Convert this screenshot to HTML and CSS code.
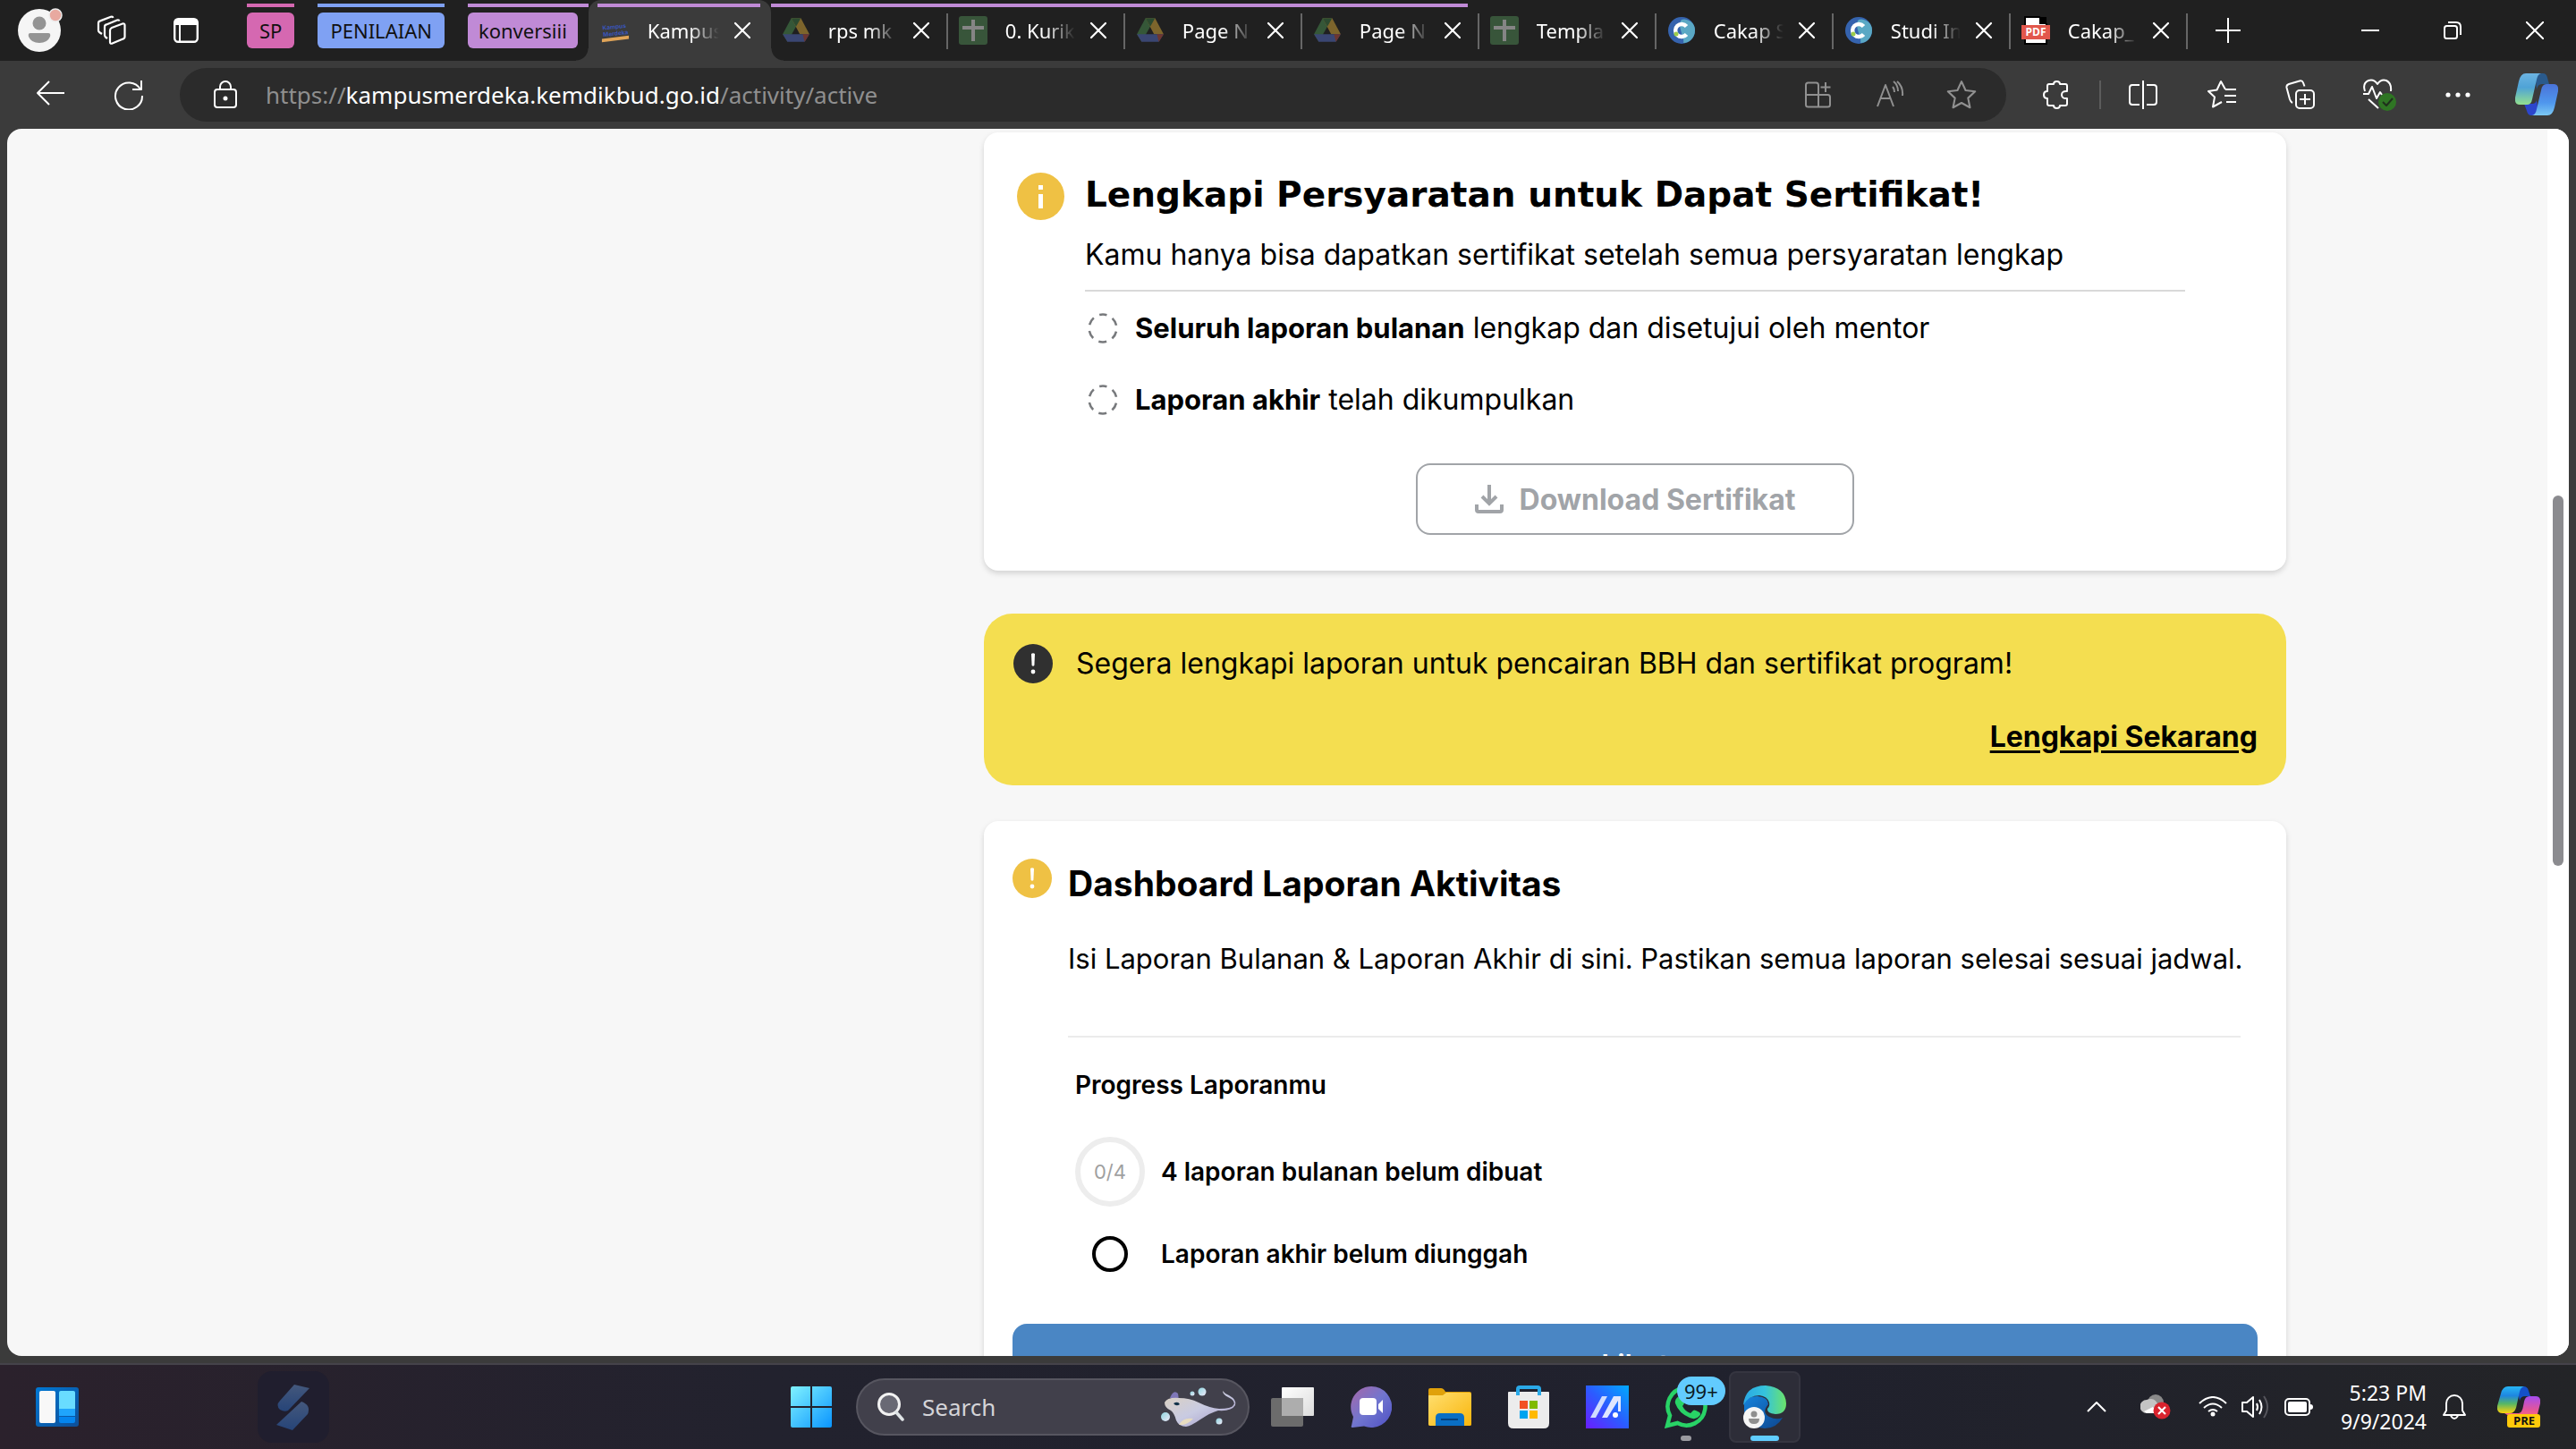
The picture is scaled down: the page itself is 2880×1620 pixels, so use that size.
FILE: index.html
```html
<!DOCTYPE html>
<html lang="id">
<head>
<meta charset="utf-8">
<title>Kampus Merdeka</title>
<link rel="stylesheet" href="styles.css">
</head>
<body>
<svg class="defs" aria-hidden="true">
  <defs>
    <linearGradient id="cop1" x1="0" y1="0" x2="0" y2="1"><stop offset="0" stop-color="#6cb4e2"/><stop offset=".45" stop-color="#4fa3d6"/><stop offset="1" stop-color="#93e08f"/></linearGradient>
    <linearGradient id="cop2" x1="0" y1="0" x2="0" y2="1"><stop offset="0" stop-color="#4a73d8"/><stop offset=".6" stop-color="#4f97ee"/><stop offset="1" stop-color="#7cc8f2"/></linearGradient>
    <linearGradient id="pre1" x1="0" y1="0" x2="0" y2="1"><stop offset="0" stop-color="#27b6f5"/><stop offset=".35" stop-color="#1e86e0"/><stop offset=".65" stop-color="#58b765"/><stop offset="1" stop-color="#ffd20a"/></linearGradient>
    <linearGradient id="pre2" x1="0" y1="0" x2="0" y2="1"><stop offset="0" stop-color="#a64df0"/><stop offset=".6" stop-color="#e0559d"/><stop offset="1" stop-color="#ff6a7c"/></linearGradient>
    <linearGradient id="win" x1="0" y1="0" x2="1" y2="1"><stop offset="0" stop-color="#80f2ff"/><stop offset="1" stop-color="#0a95ff"/></linearGradient>
    <linearGradient id="wid" x1="0" y1="0" x2="1" y2="1"><stop offset="0" stop-color="#0078d4"/><stop offset="1" stop-color="#0f4e96"/></linearGradient>
    <linearGradient id="ess" x1="0" y1="0" x2="0" y2="1"><stop offset="0" stop-color="#44587c"/><stop offset="1" stop-color="#264478"/></linearGradient>
    <linearGradient id="ray" x1="0" y1="0" x2="1" y2="1"><stop offset="0" stop-color="#ded2bd"/><stop offset=".5" stop-color="#c9cbe2"/><stop offset="1" stop-color="#9f94c4"/></linearGradient>
    <linearGradient id="bub" x1="0" y1="0" x2="1" y2="1"><stop offset="0" stop-color="#8ed6e0"/><stop offset="1" stop-color="#efe8f8"/></linearGradient>
    <linearGradient id="tv" x1="0" y1="0" x2="1" y2="1"><stop offset="0" stop-color="#fff"/><stop offset="1" stop-color="#dcdcdc"/></linearGradient>
    <linearGradient id="chat" x1="0" y1="0" x2="1" y2="1"><stop offset="0" stop-color="#a867a8"/><stop offset=".5" stop-color="#7176cf"/><stop offset="1" stop-color="#4f50c4"/></linearGradient>
    <linearGradient id="fol" x1="0" y1="0" x2="1" y2="1"><stop offset="0" stop-color="#ffdf70"/><stop offset="1" stop-color="#f9b50b"/></linearGradient>
    <linearGradient id="asus" x1="0" y1="1" x2="1" y2="0"><stop offset="0" stop-color="#6a1dff"/><stop offset=".5" stop-color="#2b5cff"/><stop offset="1" stop-color="#00aaff"/></linearGradient>
    <linearGradient id="edgeA" x1="0" y1="0" x2="1" y2="0"><stop offset="0" stop-color="#2aa7e4"/><stop offset=".5" stop-color="#35c3dd"/><stop offset="1" stop-color="#6be36a"/></linearGradient>
    <linearGradient id="edgeB" x1="0" y1="0" x2="1" y2="1"><stop offset="0" stop-color="#1583dc"/><stop offset="1" stop-color="#0d468f"/></linearGradient>
    <symbol id="x" viewBox="0 0 20 20"><path d="M2 2 18 18M18 2 2 18" stroke="currentColor" stroke-width="2.2" fill="none" stroke-linecap="round"/></symbol>
    <symbol id="drive" viewBox="0 0 30 28"><path d="M10 1h10l-14 25L1 18z" fill="#355738"/><path d="M10 1h10l9 17H19z" fill="#7d652c"/><path d="M10 1h10l-5 9z" fill="#2c4a30"/><path d="M1 18h28l-5 8H6z" fill="#3a4672"/><path d="M22 18h7l-5 8z" fill="#6d3630"/></symbol>
    <symbol id="sheet" viewBox="0 0 32 32"><rect width="32" height="32" rx="3" fill="#38553a"/><path d="M14 4h4v24h-4zM4 11h24v4H4z" fill="#858585"/></symbol>
    <symbol id="cakap" viewBox="0 0 32 32"><circle cx="16" cy="16" r="15" fill="#3563ae"/><path d="M16 4a12 12 0 0 1 15 12c0 8-6 14-13 14 2-6-8-20-2-26z" fill="#5aa8c4"/><path d="M21.500 11.500A7 7 0 1 0 21.500 20.500" fill="none" stroke="#fff" stroke-width="4.500"/><circle cx="10" cy="20" r="2.500" fill="#9ccc4a"/></symbol>
    <symbol id="dashed" viewBox="0 0 32 32"><circle cx="16" cy="16" r="14.500" fill="none" stroke="#77797c" stroke-width="2.400" stroke-dasharray="8.500 6.680" stroke-dashoffset="4.250" transform="rotate(-90 16 16)"/></symbol>
    <symbol id="alert" viewBox="0 0 44 44"><circle cx="22" cy="22" r="22" fill="currentColor"/><path d="M20 11q2-1.500 4 0l-.600 13q-1.400 1.500-2.800 0z" fill="#fff"/><circle cx="22" cy="31" r="2.400" fill="#fff"/></symbol>
  </defs>
</svg>

<div class="window">
  <header class="tabstrip">
    <button class="icon-btn avatar" aria-label="Profil"><svg width="50" height="50" viewBox="0 0 50 50"><circle cx="24" cy="25" r="24" fill="#f5f5f5"/><circle cx="24" cy="17" r="7.500" fill="#949494"/><path d="M14 28h20q3 0 2 4-3 7-12 7t-12-7q-1-4 2-4z" fill="#949494"/><circle cx="42" cy="8" r="7" fill="#e8a9a0" stroke="#ececec" stroke-width="1.500"/></svg></button>
    <button class="icon-btn spaces" aria-label="Ruang kerja"><svg width="34" height="34" viewBox="0 0 34 34" fill="none" stroke="#fff" stroke-width="2.200" stroke-linejoin="round"><path d="m17 14 12-4.500q2.500-.500 2.500 1.500v13q0 2-2 2.600l-12 5q-2.500.700-2.500-1.500V17q0-2 2-3z"/><path d="m12 26-2-1.500q-1-1-1-2.500V13q0-2 2-2.600L23 5.500q2-.500 2.500 1"/><path d="m6 21-3-2q-1-1-1-2V9q0-2 2-2.600L16 1.800q2-.500 2.500 1"/></svg></button>
    <button class="icon-btn panel" aria-label="Menu tab"><svg width="28" height="28" viewBox="0 0 28 28"><rect x="1.200" y="1.200" width="25.600" height="25.600" rx="4" fill="none" stroke="#fff" stroke-width="2.400"/><path d="M1 8V4q0-3 3-3h20q3 0 3 3v4zM6 8h2v18H6z" fill="#fff"/></svg></button>
    <div class="group pink"><button class="chip">SP</button></div>
    <div class="group blue"><button class="chip">PENILAIAN</button></div>
    <div class="group purple"><button class="chip">konversiii</button></div>
    <div class="tab active"><svg class="fav" viewBox="0 0 34 34"><text x="2" y="15" class="logo-text" transform="rotate(-6 17 17)">Kampus</text><text x="2" y="23" class="logo-text" transform="rotate(-6 17 17)">Merdeka</text><path d="m1 27 32-4v4L1 31z" fill="#e0a458"/></svg><span class="name">Kampus</span><button class="close" aria-label="Tutup"><svg><use href="#x"/></svg></button></div>
    <div class="tab grouped"><svg class="fav"><use href="#drive"/></svg><span class="name">rps mk</span><button class="close" aria-label="Tutup"><svg><use href="#x"/></svg></button></div>
    <div class="tab grouped"><svg class="fav"><use href="#sheet"/></svg><span class="name">0. Kurik</span><button class="close" aria-label="Tutup"><svg><use href="#x"/></svg></button></div>
    <div class="tab grouped"><svg class="fav"><use href="#drive"/></svg><span class="name">Page N</span><button class="close" aria-label="Tutup"><svg><use href="#x"/></svg></button></div>
    <div class="tab grouped last"><svg class="fav"><use href="#drive"/></svg><span class="name">Page N</span><button class="close" aria-label="Tutup"><svg><use href="#x"/></svg></button></div>
    <div class="tab"><svg class="fav"><use href="#sheet"/></svg><span class="name">Templa</span><button class="close" aria-label="Tutup"><svg><use href="#x"/></svg></button></div>
    <div class="tab"><svg class="fav"><use href="#cakap"/></svg><span class="name">Cakap S</span><button class="close" aria-label="Tutup"><svg><use href="#x"/></svg></button></div>
    <div class="tab"><svg class="fav"><use href="#cakap"/></svg><span class="name">Studi In</span><button class="close" aria-label="Tutup"><svg><use href="#x"/></svg></button></div>
    <div class="tab"><svg class="fav" viewBox="0 0 32 32"><path d="M4 1h16l8 8v22H4z" fill="#fff" stroke="#000" stroke-width="2"/><path d="M20 1h8v8h-8z" fill="#000"/><rect y="10" width="32" height="16" fill="#e2574c"/><text x="16" y="22" text-anchor="middle" class="pdf-text">PDF</text></svg><span class="name">Cakap_</span><button class="close" aria-label="Tutup"><svg><use href="#x"/></svg></button></div>
    <button class="icon-btn new-tab" aria-label="Tab baru"><svg width="28" height="28" viewBox="0 0 28 28"><path d="M14 0v28M0 14h28" stroke="#fff" stroke-width="2"/></svg></button>
    <div class="win-controls">
      <button class="icon-btn" aria-label="Kecilkan"><svg width="20" height="20" viewBox="0 0 20 20"><path d="M0 10h20" stroke="#fff" stroke-width="2"/></svg></button>
      <button class="icon-btn" aria-label="Pulihkan"><svg width="20" height="20" viewBox="0 0 20 20" fill="none" stroke="#fff" stroke-width="2"><rect x="1" y="5" width="14" height="14" rx="2.500"/><path d="M5 1h9q5 0 5 5v9"/></svg></button>
      <button class="icon-btn" aria-label="Tutup jendela"><svg width="20" height="20" viewBox="0 0 20 20"><path d="m0 0 20 20M20 0 0 20" stroke="#fff" stroke-width="2"/></svg></button>
    </div>
  </header>

  <nav class="toolbar">
    <button class="tool" aria-label="Kembali"><svg width="32" height="32" viewBox="0 0 32 32"><path d="M32 14H2M15 1 2 14l13 13" /></svg></button>
    <button class="tool reload" aria-label="Muat ulang"><svg width="34" height="34" viewBox="0 0 34 34"><path d="M30 11A15 15 0 1 0 32 18M31 1v10H21"/></svg></button>
    <div class="address">
      <svg class="lock" width="26" height="32" viewBox="0 0 26 32"><rect x="1" y="10" width="24" height="20" rx="3"/><path d="M7 10V7a6 6 0 0 1 12 0v3"/><circle cx="13" cy="20" r="1.500" fill="#fff"/></svg>
      <div class="url">https://<b>kampusmerdeka.kemdikbud.go.id</b>/activity/active</div>
      <button class="mini" aria-label="Aplikasi"><svg width="30" height="30" viewBox="0 0 30 30"><path d="M15 15V4q0-2.500-2.500-2.500h-9Q1 1.500 1 4v22q0 2.500 2.500 2.500h22Q28 28.500 28 26v-8.500Q28 15 25.500 15H1M15 15v13.500M23 1v11M17.500 6.500h11"/></svg></button>
      <button class="mini" aria-label="Baca nyaring"><svg width="32" height="32" viewBox="0 0 32 32"><path d="m2 29 9-24 9 24M5 20h12M20 1q5 4 5 11M19 7q2 2 2 6M24 1q7 6 6 16"/></svg></button>
      <button class="mini" aria-label="Favorit"><svg width="34" height="34" viewBox="0 0 32 32"><path d="m16 2 4.300 9.300 10 1.200-7.400 6.900 2 10L16 24.500l-8.900 4.900 2-10L1.700 12.500l10-1.200z"/></svg></button>
    </div>
    <button class="tool" aria-label="Ekstensi"><svg width="32" height="32" viewBox="0 0 32 32"><path d="M6 6q0-2 2-2h5q0-3 3.500-3T20 4h6q2 0 2 2v6q-6-.500-6 4t6 4v6q0 2-2 2h-6q0 3-3.500 3T13 28H8q-2 0-2-2v-6q-4 0-4-4t4-4z"/></svg></button>
    <span class="divider"></span>
    <div class="tools">
      <button class="tool" aria-label="Layar terpisah"><svg width="32" height="32" viewBox="0 0 32 32"><path d="M16 0v32M12 5H4Q1 5 1 8v16q0 3 3 3h8M20 5h8q3 0 3 3v16q0 3-3 3h-8"/></svg></button>
      <button class="tool" aria-label="Daftar favorit"><svg width="34" height="34" viewBox="0 0 34 34"><path d="M21 11h12M20 18h13M22 25h11M21 11l-5-9-4.500 9.500L2 13l7 6.500L7 30.500l10-5.500"/></svg></button>
      <button class="tool" aria-label="Koleksi"><svg width="34" height="34" viewBox="0 0 34 34"><rect x="12" y="12" width="20" height="20" rx="4"/><path d="M22 16v12M16 22h12M8 26q-2-1-3-4L1.500 9Q1 6 4 5l12-3.500q3-.700 4 2l1.500 4"/></svg></button>
      <button class="tool" aria-label="Esensial browser"><svg width="38" height="36" viewBox="0 0 38 36"><path d="M3 14Q0 5 7 2q6-2 10 4 4-6 10-4 6 3 5 12M1 17h6l4-8 5 13 4-7 2 3M7 23l11 10"/><circle cx="28" cy="26" r="10" fill="#2f7524" stroke="none"/><path d="m23 26 4 4 7-8" stroke="#1f2f1c"/></svg></button>
      <button class="tool" aria-label="Lainnya"><svg width="28" height="8" viewBox="0 0 28 8"><g fill="#fff" stroke="none"><circle cx="3" cy="4" r="2.600"/><circle cx="14" cy="4" r="2.600"/><circle cx="25" cy="4" r="2.600"/></g></svg></button>
      <button class="tool" aria-label="Copilot"><svg width="48" height="48" viewBox="0 0 48 48" class="solid"><path d="M22 0h9q4 0 5 5l2 7h-8q-5 0-6 6z" fill="#2a5a8c"/><path d="M26 47h-8q-4 0-5-5l-3-8h9q4 0 5-4z" fill="#2c46cc"/><path d="M12 0h17q-4 1-5 7l-5 22q-1 6-6 6H5q-6 0-5-8L4 9q2-9 8-9z" fill="url(#cop1)"/><path d="M36 47H19q4-1 5-7l5-21q1-7 6-7h8q6 0 5 8l-4 18q-2 9-8 9z" fill="url(#cop2)"/></svg></button>
    </div>
  </nav>

  <div class="viewport">
    <main class="page">
      <section class="card certificate">
        <div class="cert-body">
          <svg class="info" width="53" height="53" viewBox="0 0 53 53"><circle cx="26.500" cy="26.500" r="26.500" fill="#efc144"/><path d="M24 14h5v5h-5zM24 24h5v16h-5z" fill="#fff"/></svg>
          <div class="cert-text">
            <h1>Lengkapi Persyaratan untuk Dapat Sertifikat!</h1>
            <p class="lead">Kamu hanya bisa dapatkan sertifikat setelah semua persyaratan lengkap</p>
            <ul class="checks">
              <li><svg width="34" height="34"><use href="#dashed"/></svg><span><strong>Seluruh laporan bulanan</strong> lengkap dan disetujui oleh mentor</span></li>
              <li><svg width="34" height="34"><use href="#dashed"/></svg><span><strong>Laporan akhir</strong> telah dikumpulkan</span></li>
            </ul>
          </div>
        </div>
        <button class="download"><svg width="32" height="32" viewBox="0 0 32 32"><path d="M16 0v20M8 13l8 8 8-8M2 22v6q0 2 2 2h24q2 0 2-2v-6"/></svg>Download Sertifikat</button>
      </section>

      <section class="banner">
        <div class="banner-row"><svg class="dark" width="44" height="44"><use href="#alert"/></svg><p>Segera lengkapi laporan untuk pencairan BBH dan sertifikat program!</p></div>
        <a href="#laporan">Lengkapi Sekarang</a>
      </section>

      <section class="card report" id="laporan">
        <div class="report-body">
          <svg class="amber" width="44" height="44"><use href="#alert"/></svg>
          <div class="report-text">
            <h2>Dashboard Laporan Aktivitas</h2>
            <p class="desc">Isi Laporan Bulanan &amp; Laporan Akhir di sini. Pastikan semua laporan selesai sesuai jadwal.</p>
            <div class="progress">
              <h3>Progress Laporanmu</h3>
              <div class="step"><span class="count">0/4</span><span>4 laporan bulanan belum dibuat</span></div>
              <div class="step"><span class="slot"><i class="ring"></i></span><span>Laporan akhir belum diunggah</span></div>
            </div>
          </div>
        </div>
        <button class="view">Lihat</button>
      </section>
    </main>
    <div class="scrollbar"><span class="thumb"></span></div>
  </div>
</div>

<footer class="taskbar">
  <div class="task-left">
    <button class="task" aria-label="Widget"><svg width="48" height="44" viewBox="0 0 48 44"><rect width="48" height="44" rx="3" fill="url(#wid)"/><rect x="4" y="4" width="18" height="36" rx="2" fill="#f8f8f8"/><path d="M26 6q0-2 2-2h14q2 0 2 2v18H26z" fill="#69dcff"/><path d="M26 24h18v8H26z" fill="#1fa5fc"/><path d="M26 33h18v5q0 2-2 2H28q-2 0-2-2z" fill="#0485ee"/></svg></button>
    <button class="task spark" aria-label="Peluncur"><svg width="40" height="52" viewBox="0 0 40 52"><path d="M21 1 38 5 14 30q-4 2-9-1-5-5 0-10z" fill="url(#ess)"/><path d="m29 20q11 4 7 14L19 52 1 46z" fill="url(#ess)"/></svg></button>
  </div>
  <div class="task-center">
    <button class="task" aria-label="Mulai"><svg width="46" height="46" viewBox="0 0 46 46"><path d="M2 0h20v22H0V2q0-2 2-2zM24 0h20q2 0 2 2v20H24zM0 24h22v22H2q-2 0-2-2zM24 24h22v20q0 2-2 2H24z" fill="url(#win)"/></svg></button>
    <label class="search">
      <svg width="30" height="32" viewBox="0 0 30 32"><circle cx="13" cy="13" r="11.500" fill="#696974" stroke="#f2f2f2" stroke-width="3"/><path d="m21 22 7 8" stroke="#dfe4e6" stroke-width="3.500" stroke-linecap="round"/></svg>
      <input type="search" placeholder="Search" aria-label="Search">
      <svg width="86" height="44" viewBox="0 0 86 44"><path d="M10 12q4-10 9-5l1 7z" fill="#7f77b8"/><path d="M4 17q3-6 16-5 12 0 22 5 12 6 23 7 14 0 16-4 3-5-6-9-6-3-6-7 2 3 7 5 9 5 7 11-4 7-19 6-8 2-20 10-10 7-16 8-8 0-11-7-2-8-6-11-7-3-7-9z" fill="url(#ray)"/><path d="M20 42q5-9 16-7-7 8-16 7z" fill="#e7dcc0"/><path d="M14 18q5-3 7 1-4 3-7-1z" fill="#12324a"/><g fill="url(#bub)"><circle cx="5" cy="33" r="5"/><circle cx="46" cy="5" r="4.500"/><circle cx="35" cy="7" r="2.500"/><circle cx="65" cy="38" r="3.500"/></g></svg>
    </label>
    <button class="task" aria-label="Tampilan tugas"><svg width="48" height="44" viewBox="0 0 48 44"><rect x="12" width="36" height="32" rx="1" fill="url(#tv)"/><rect y="12" width="36" height="32" rx="2" fill="#6c6c6c"/><path d="M12 12h24v20H12z" fill="#adadad"/></svg></button>
    <button class="task" aria-label="Chat"><svg width="46" height="46" viewBox="0 0 46 46"><path d="M23 0a23 23 0 1 1-8 44.500L2 46q-2 0-1-2l2-10A23 23 0 0 1 23 0z" fill="url(#chat)"/><rect x="10" y="13" width="19" height="19" rx="4" fill="#fff"/><path d="m31 20 5-5v15l-5-5z" fill="#fff"/></svg></button>
    <button class="task" aria-label="File"><svg width="48" height="42" viewBox="0 0 48 42"><path d="M0 8V2q0-2 2-2h12q3 0 5 4h27q2 0 2 2v34q0 2-2 2H2q-2 0-2-2z" fill="#e0a10a"/><path d="M0 8h16l4-3h26q2 0 2 2v33q0 2-2 2H2q-2 0-2-2z" fill="url(#fol)"/><path d="M8 42V33q0-5 5-5h22q5 0 5 5v9z" fill="#0a6fc4"/><path d="M14 35h19" stroke="#06427e" stroke-width="2"/></svg></button>
    <button class="task" aria-label="Store"><svg width="46" height="48" viewBox="0 0 46 48"><path d="M0 8q0-1 1-1h44q1 0 1 1v34q0 6-6 6H6q-6 0-6-6z" fill="#ececec"/><path d="M11 11V4q0-2 2-2h20q2 0 2 2v7" fill="none" stroke="#2aa9e8" stroke-width="4"/><path d="M13 17h9v9h-9z" fill="#f25022"/><path d="M24 17h9v9h-9z" fill="#7fba00"/><path d="M13 28h9v9h-9z" fill="#00a4ef"/><path d="M24 28h9v9h-9z" fill="#ffb900"/></svg></button>
    <button class="task" aria-label="MyASUS"><svg width="48" height="48" viewBox="0 0 48 48"><path d="M0 0h48v48H0z" fill="url(#asus)"/><path d="M5 36 18 12h6L11 36z" fill="#cfdcff"/><path d="M18 36 31 12h8v17h-3V17L24 36z" fill="#dfe6ff"/><circle cx="33" cy="33" r="3" fill="#fff"/></svg></button>
    <button class="task whatsapp" aria-label="WhatsApp"><svg width="48" height="48" viewBox="0 0 48 48"><path d="M3 45 6 33.500A21 21 0 1 1 14.500 42z" fill="none" stroke="#28d366" stroke-width="4.500"/><path d="M16 12q3-1 4 2l2 5q0 2-2 4 3 6 9 8l3-3q1-1 3 0l4 2q2 2 0 4-4 5-11 2Q16 31 12 20q-1-5 4-8z" fill="#28d366"/></svg><span class="badge">99+</span><i class="dot"></i></button>
    <button class="task edge" aria-label="Edge"><svg width="48" height="48" viewBox="0 0 48 48"><path d="M1 20Q4 12 16 12q12 1 12 9-8 9 1 14 8 4 15 1-7 12-20 12Q4 46 1 28z" fill="url(#edgeB)"/><path d="M0 22Q2 0 25 0q22 2 23 20 0 12-12 12-10-1-9-6 3-3 2-7-2-7-11-8Q6 11 0 22z" fill="url(#edgeA)"/><circle cx="12" cy="36" r="12" fill="#f5f5f5"/><circle cx="12" cy="32" r="3.500" fill="#8f8f8f"/><path d="M6 37h12q0 6-6 6t-6-6z" fill="#8f8f8f"/></svg><i class="dot"></i></button>
  </div>
  <div class="tray">
    <svg class="chev" width="22" height="14" viewBox="0 0 22 14"><path d="M1 12 11 2l10 10"/></svg>
    <svg class="cloud" width="34" height="28" viewBox="0 0 34 28"><circle cx="17" cy="9" r="9" fill="#8a8a8a"/><path d="M7 21a7 7 0 0 1 0-15q10-4 13 7l-4 8z" fill="#c4c4c4"/><path d="m4 19 10-5 5 7H7z" fill="#fff"/><circle cx="24" cy="18" r="9.500" fill="#d9232e"/><path d="m20 14 8 8M28 14l-8 8" stroke="#fff" stroke-width="2.200"/></svg>
    <div class="status">
      <svg width="32" height="24" viewBox="0 0 32 24"><path d="M1 8q15-14 30 0M6 13q10-9 20 0M11 17q5-4 10 0"/><circle cx="16" cy="20" r="2.500" fill="#fff" stroke="none"/></svg>
      <svg width="32" height="28" viewBox="0 0 32 28"><path d="M1 9h5l7-6v22l-7-6H1zM17 10q2 4 0 8M20 6q5 8 0 16"/><path d="M25 2q8 12 0 24" class="dim"/></svg>
      <svg width="32" height="20" viewBox="0 0 32 20"><rect x="1" y="1" width="27" height="18" rx="4"/><rect x="4" y="4" width="21" height="12" rx="2" fill="#fff" stroke="none"/><path d="M29 7q3 0 3 3t-3 3z" fill="#fff" stroke="none"/></svg>
    </div>
    <div class="clock"><span>5:23 PM</span><span>9/9/2024</span></div>
    <svg class="bell" width="26" height="30" viewBox="0 0 26 30"><path d="M1 24l3-5v-8a9 9 0 0 1 18 0v8l3 5zM9 25q4 6 8 0"/></svg>
    <svg class="pre" width="48" height="46" viewBox="0 0 48 46"><path d="M22 0h7q5 0 6 5l2 6h-6q-5 0-6 5z" fill="#1450c8"/><path d="M12 0h18q-4 1-5 6l-4 18q-2 6-7 6H6q-7 0-6-8L4 8q2-8 8-8z" fill="url(#pre1)"/><path d="M8 30h16q4-1 5-8l1-5q1-6 6-6h7q6 0 5 8l-4 16H16z" fill="url(#pre2)"/><rect x="11" y="31" width="37" height="15" rx="3" fill="#ffca0a"/><text x="30" y="43" text-anchor="middle" class="pre-text">PRE</text></svg>
  </div>
</footer>
</body>
</html>
```
FILE: styles.css
```css
* { box-sizing: border-box; }

body {
  margin: 0;
  height: 100vh;
  display: flex;
  flex-direction: column;
  overflow: hidden;
  background: #3b3b3b;
  color: #000;
  font-family: "Inter", sans-serif;
  font-size: 32px;
}

h1, h2, h3, p, ul { margin: 0; padding: 0; }
button { font: inherit; color: inherit; background: none; border: 0; padding: 0; }
svg { display: block; flex: none; }
.defs { position: absolute; width: 0; height: 0; }

.window { flex: 1; min-height: 0; display: flex; flex-direction: column; }

/* Tab strip */
.tabstrip {
  flex: none;
  height: 68px;
  display: flex;
  align-items: center;
  padding-left: 20px;
  background: #202020;
  color: #fff;
  font-family: "Noto Sans", sans-serif;
  font-size: 22px;
}
.icon-btn { display: flex; align-items: center; justify-content: center; flex: none; }
.spaces { margin-left: 38px; }
.panel { margin: 0 54px 0 52px; }

.group { align-self: stretch; display: flex; align-items: center; margin-right: 26px; background: linear-gradient(var(--c) 0 0) 0 4px / 100% 4px no-repeat; }
.chip { height: 40px; padding: 0 14px; border-radius: 6px; background: var(--c); color: #111; }
.pink { --c: #d568b1; }
.blue { --c: #7fa1f3; }
.purple { --c: #c08ad6; margin-right: 0; padding-right: 12px; }
.purple .chip { padding: 0 12px; }

.tab {
  position: relative;
  flex: 0 1 198px;
  min-width: 0;
  height: 68px;
  display: flex;
  align-items: center;
  padding: 0 20px 0 12px;
  background: linear-gradient(#666 0 0) right 15px / 2px 40px no-repeat;
}
.fav { width: 32px; height: 32px; margin-right: 20px; }
.tab .name { flex: 1; min-width: 0; overflow: hidden; white-space: nowrap; -webkit-mask-image: linear-gradient(to right, #000 55%, transparent 95%); mask-image: linear-gradient(to right, #000 55%, transparent 95%); }
.close { flex: none; margin-left: 12px; }
.close svg { width: 20px; height: 20px; }
.grouped { background: linear-gradient(#666 0 0) right 15px / 2px 40px no-repeat, linear-gradient(#c08ad6 0 0) 0 4px / 100% 4px no-repeat; }
.grouped.last { background-size: 2px 40px, calc(100% - 13px) 4px; }
.active {
  flex-basis: 204px;
  padding: 0 22px 0 14px;
  border-radius: 14px 14px 0 0;
  background: linear-gradient(#c08ad6 0 0) 10px 4px / calc(100% - 22px) 4px no-repeat, #3b3b3b;
}
.active::before, .active::after { content: ""; position: absolute; bottom: 0; width: 14px; height: 14px; }
.active::before { right: 100%; background: radial-gradient(circle at 0 0, transparent 13px, #3b3b3b 14px); }
.active::after { left: 100%; background: radial-gradient(circle at 100% 0, transparent 13px, #3b3b3b 14px); }
.logo-text { font: 700 7px "Inter", sans-serif; fill: #3a55b8; }
.pdf-text { font: 700 12px "Open Sans", sans-serif; fill: #fff; }
.new-tab { margin-left: 31px; }
.win-controls { margin-left: auto; display: flex; }
.win-controls .icon-btn { width: 92px; height: 68px; }

/* Toolbar */
.toolbar { flex: none; height: 76px; display: flex; align-items: center; padding: 0 16px 0 28px; color: #fff; }
.toolbar svg:not(.solid) { fill: none; stroke: #fff; stroke-width: 2; stroke-linejoin: round; }
.tool { width: 56px; height: 56px; display: flex; align-items: center; justify-content: center; flex: none; }
.reload { margin: 0 29px 0 32px; }
.address {
  flex: 1;
  min-width: 0;
  height: 60px;
  display: flex;
  align-items: center;
  gap: 40px;
  margin-right: 28px;
  padding: 0 30px 0 38px;
  border-radius: 30px;
  background: #2b2b2b;
}
.lock { margin-right: -8px; }
.url { flex: 1; min-width: 0; overflow: hidden; font: 26px/40px "Noto Sans", sans-serif; color: #8f8f8f; white-space: nowrap; }
.url b { font-weight: 400; color: #fff; }
.mini { width: 40px; display: flex; justify-content: center; }
.toolbar .mini svg { stroke: #909090; }
.divider { width: 2px; height: 32px; margin: 0 19px 0 20px; background: #5c5c5c; }
.tools { display: flex; gap: 32px; }

/* Page area */
.viewport { flex: 1; min-height: 0; display: flex; margin: 0 8px 8px; border-radius: 16px; overflow: hidden; background: #f7f7f7; }
.page { flex: 1; min-width: 0; display: flex; flex-direction: column; align-items: flex-end; padding: 4px 292px 0 40px; }
.page > * { width: 100%; max-width: 1456px; flex: none; }
.scrollbar { width: 24px; display: grid; grid-template-rows: 410fr 414fr 548fr; justify-content: center; background: #fff; }
.thumb { grid-row: 2; width: 12px; border-radius: 6px; background: #8b8b8f; }

.card { border-radius: 16px; background: #fff; box-shadow: 0 3px 6px rgba(0, 0, 0, .15); }
.certificate { padding: 45px 0 40px; margin-bottom: 48px; }
.cert-body { display: flex; gap: 23px; padding: 0 113px 0 37px; }
.cert-text { flex: 1; min-width: 0; }
h1 { font: 700 39px/50px "DejaVu Sans", sans-serif; }
.lead { margin-top: 18px; padding-bottom: 15px; border-bottom: 2px solid #d9d9d9; line-height: 48px; }
.checks { list-style: none; display: grid; gap: 32px; margin-top: 17px; padding-left: 3px; line-height: 48px; }
.checks li { display: flex; align-items: center; gap: 19px; }
strong { font-size: 31px; font-weight: 700; }
.download {
  width: 490px;
  height: 80px;
  display: flex;
  align-items: center;
  justify-content: center;
  gap: 18px;
  margin: 47px auto 0;
  border: 2px solid #a1a4a8;
  border-radius: 16px;
  color: #a1a4a8;
  font-weight: 700;
}
.download svg { fill: none; stroke: currentColor; stroke-width: 4; }

.banner { margin-bottom: 40px; padding: 32px 32px 30px 33px; border-radius: 32px; background: #f4de50; line-height: 48px; }
.banner-row { display: flex; align-items: center; gap: 26px; margin-bottom: 34px; }
.banner a { display: block; width: fit-content; margin-left: auto; color: #000; font-weight: 700; text-underline-offset: 4px; text-decoration-thickness: 3px; }
.dark { color: #303030; }
.amber { color: #efc144; }

.report { padding: 42px 32px 40px; }
.report-body { display: flex; gap: 18px; padding-right: 19px; }
.report-text { flex: 1; min-width: 0; }
h2 { font: 700 39px/56px "Inter", sans-serif; }
.desc { margin-top: 32px; padding-bottom: 62px; border-bottom: 2px solid #ebebeb; font-size: 31px; line-height: 48px; white-space: nowrap; }
.progress { padding: 33px 0 0 8px; font-size: 28px; font-weight: 600; line-height: 40px; }
h3 { margin-bottom: 38px; font-size: 28px; font-weight: 600; }
.step { display: flex; align-items: center; gap: 18px; margin-bottom: 33px; }
.step:last-child { margin-bottom: 0; }
.count { width: 78px; height: 78px; display: grid; place-items: center; border: 6px solid #ededed; border-radius: 50%; color: #a0a0a0; font-size: 22px; font-weight: 400; }
.slot { width: 78px; display: flex; justify-content: center; }
.ring { width: 40px; height: 40px; border: 4px solid #000; border-radius: 50%; }
.view { display: block; width: 100%; height: 92px; margin-top: 58px; border-radius: 16px; background: #4a86c4; color: #fff; font-weight: 600; }

/* Taskbar */
.taskbar {
  flex: none;
  height: 96px;
  display: grid;
  grid-template-columns: 1fr auto 1fr;
  align-items: center;
  border-top: 2px solid #45434a;
  background: linear-gradient(to right, #2b212c, #22222e 30%, #20212d 70%, #232427);
  color: #fff;
  font-family: "Noto Sans", sans-serif;
}
.task { position: relative; width: 80px; height: 80px; display: flex; align-items: center; justify-content: center; flex: none; border-radius: 8px; }
.task-left { display: flex; padding-left: 24px; gap: 184px; }
.spark { background: #201e2e; border-radius: 16px; }
.task-center { display: flex; align-items: center; gap: 8px; }
.search {
  width: 440px;
  height: 64px;
  display: flex;
  align-items: center;
  gap: 20px;
  margin-left: 2px;
  padding: 0 11px 0 22px;
  border: 2px solid #575660;
  border-radius: 32px;
  background: #41404b;
}
.search input { flex: 1; min-width: 0; padding: 0; border: 0; outline: 0; background: none; color: #d4d4d8; font: 26px "Noto Sans", sans-serif; }
.search input::placeholder { color: #d4d4d8; opacity: 1; }
.badge { position: absolute; left: 30px; top: 6px; padding: 0 8px; border-radius: 16px; background: #62cbff; color: #0c1a24; font-size: 22px; line-height: 32px; }
.dot { position: absolute; left: 34px; bottom: 2px; width: 12px; height: 6px; border-radius: 3px; background: #9a9aa0; }
.edge { background: #2d2d38; border: 2px solid #353540; }
.edge .dot { left: 22px; bottom: 0; width: 32px; background: #60cdff; }

.tray { display: flex; align-items: center; justify-content: flex-end; padding-right: 40px; }
.tray svg:not(.pre):not(.cloud) { fill: none; stroke: #fff; stroke-width: 2; stroke-linejoin: round; }
.tray .dim { stroke: #55555c; }
.tray .chev { margin-right: 38px; }
.status { display: flex; align-items: center; gap: 16px; margin: 0 31px; }
.clock { display: grid; justify-items: end; font-size: 23px; line-height: 32px; }
.bell { margin: 0 35px 0 18px; }
.pre-text { font: 700 13px "Open Sans", sans-serif; fill: #111; }
```
